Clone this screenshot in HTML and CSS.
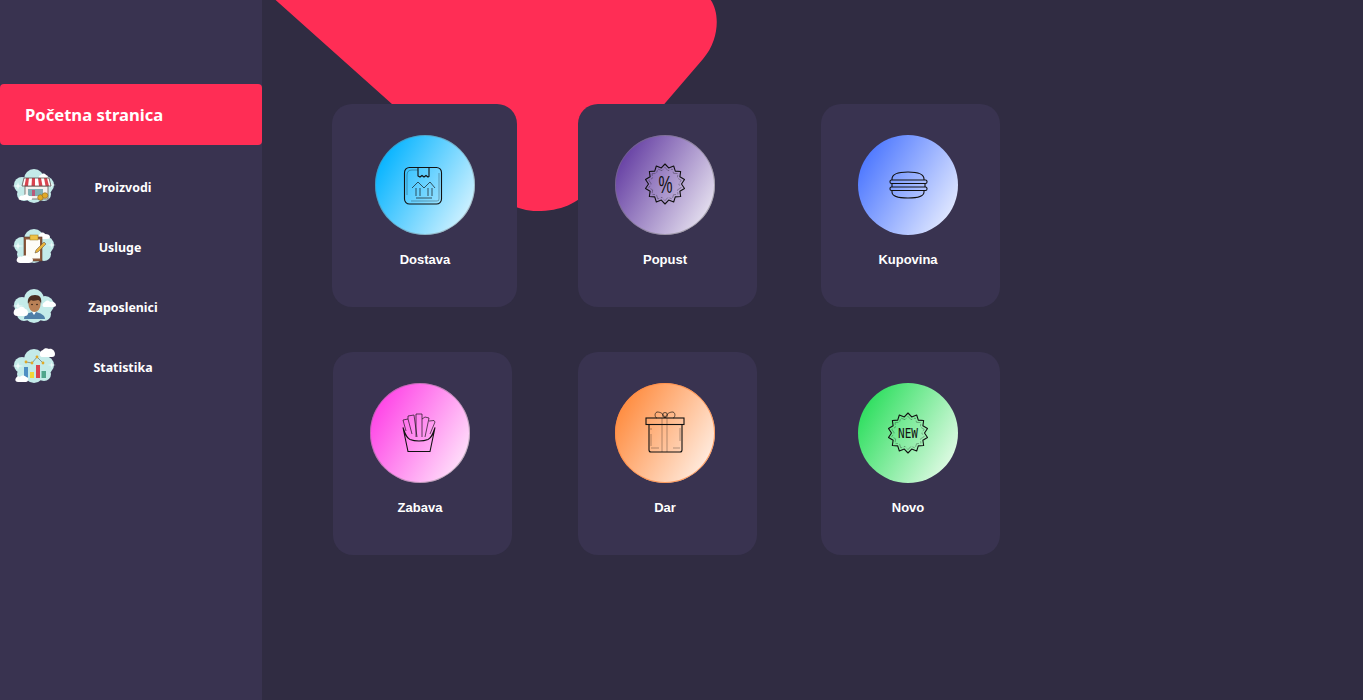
FILE: index.html
```html
<!DOCTYPE html>
<html lang="hr">
<head>
  <meta charset="UTF-8" />
  <meta name="viewport" content="width=device-width, initial-scale=1.0"/>
  <title>Početna stranica</title>
  <link rel="stylesheet" href="styles.css">
</head>
<body>

  <!-- shared shapes -->
  <svg class="defs" width="0" height="0" aria-hidden="true">
    <defs>
      <symbol id="cloud" viewBox="0 0 44 44" overflow="visible">
        <g fill="#c4ebe9">
          <circle cx="22" cy="14" r="10"/>
          <circle cx="10" cy="20" r="8"/>
          <circle cx="33" cy="20" r="9"/>
          <circle cx="22" cy="28" r="10"/>
          <circle cx="12" cy="29" r="7"/>
          <circle cx="32" cy="29" r="7"/>
        </g>
        <path fill="#eefafa" d="M0 21l5-.8 1-3 1 3 5 .8-5 .8-1 3-1-3zM35 20l4-.6.7-2.400.7 2.400 4 .6-4 .6-.7 2.400-.7-2.400z"/>
      </symbol>
      <symbol id="burst" viewBox="-25 -25 50 50">
        <polygon fill="none" stroke="#111" stroke-width="1.100" stroke-linejoin="round" points="0,-20 3.67,-16.09 8.68,-18.02 10.29,-12.9 15.64,-12.47 14.87,-7.16 19.5,-4.45 16.5,0 19.5,4.45 14.87,7.16 15.64,12.47 10.29,12.9 8.68,18.02 3.67,16.09 0,20 -3.67,16.09 -8.68,18.02 -10.29,12.9 -15.64,12.47 -14.87,7.16 -19.5,4.45 -16.5,0 -19.5,-4.45 -14.87,-7.16 -15.64,-12.47 -10.29,-12.9 -8.68,-18.02 -3.67,-16.09"/>
        <polygon fill="none" stroke="#111" stroke-opacity=".55" stroke-width=".7" stroke-dasharray="7 2 3 2" transform="scale(.83)" points="0,-20 3.67,-16.09 8.68,-18.02 10.29,-12.9 15.64,-12.47 14.87,-7.16 19.5,-4.45 16.5,0 19.5,4.45 14.87,7.16 15.64,12.47 10.29,12.9 8.68,18.02 3.67,16.09 0,20 -3.67,16.09 -8.68,18.02 -10.29,12.9 -15.64,12.47 -14.87,7.16 -19.5,4.45 -16.5,0 -19.5,-4.45 -14.87,-7.16 -15.64,-12.47 -10.29,-12.9 -8.68,-18.02 -3.67,-16.09"/>
      </symbol>
    </defs>
  </svg>

  <div class="app">

    <!-- Sidebar -->
    <nav class="sidebar">
      <a class="home-link">Početna stranica</a>

      <a class="menu-item">
        <svg class="menu-icon" viewBox="0 0 44 44">
          <use href="#cloud"/>
          <path fill="#fff" d="M29 10c1-2 4-2 5 0 2 0 3 3 0 3h-6c-2 0-1-3 1-3z"/>
          <rect x="13" y="21" width="23" height="13" fill="#f4f1ee" stroke="#6b5a58" stroke-width=".8"/>
          <rect x="16" y="24" width="15" height="7" fill="#7fb0b5"/>
          <rect x="20" y="25" width="3" height="6" fill="#b9587a"/>
          <path fill="#fff" d="M12 13h25l2 8H10z"/>
          <path fill="#d9434f" d="M14 13h3l-1 8h-3.500zM20 13h3v8h-3.500zM26 13h3l1.500 8H27zM32 13h3l2 8h-3.500z"/>
          <path fill="none" stroke="#5d4b4a" stroke-width=".8" d="M12 13h25l2 8H10z"/>
          <path fill="#fff" d="M7 33c0-2 3-3 4-2 1-2 5-2 6 0 2 0 4 1 3 3 0 1-1 1-2 1H9c-2 0-3-1-2-2z"/>
          <circle cx="28.500" cy="32.500" r="2.800" fill="#e0a929" stroke="#8a6a20" stroke-width=".6"/>
          <circle cx="33" cy="30.500" r="2.800" fill="#e0a929" stroke="#8a6a20" stroke-width=".6"/>
        </svg>
        <span class="menu-label">Proizvodi</span>
      </a>

      <a class="menu-item">
        <svg class="menu-icon" viewBox="0 0 44 44">
          <use href="#cloud"/>
          <path fill="#fff" d="M28 9c1-2 4-2 5 0 3 0 5 1 5 3 0 1-1 2-3 2h-6c-3 0-3-4-1-5z"/>
          <rect x="12" y="12" width="18" height="24" fill="#8d5a3c" stroke="#5b3a2a" stroke-width=".6"/>
          <rect x="14" y="14.500" width="14" height="19" fill="#fdfcf7"/>
          <rect x="18" y="10" width="8" height="5" fill="#eec246" stroke="#9a7a24" stroke-width=".5"/>
          <path fill="#e9b43c" stroke="#5b4a3a" stroke-width=".5" d="M24 25l8-8 2 2-8 8-3 1z"/>
          <path fill="#fff" d="M5 34c0-2 3-3 5-2 1-2 5-2 6 0 3 0 5 1 5 3 0 2-2 3-4 3H8c-3 0-4-3-3-4z"/>
        </svg>
        <span class="menu-label menu-label-left">Usluge</span>
      </a>

      <a class="menu-item">
        <svg class="menu-icon" viewBox="0 0 44 44">
          <use href="#cloud"/>
          <path fill="#4f7fa8" d="M12 34c0-4 4-6 8-7h4c4 1 9 3 9 7z"/>
          <path fill="#fff" d="M20 27l2 3 2-3z"/>
          <ellipse cx="22.500" cy="19.500" rx="6" ry="7.500" fill="#b98056"/>
          <path fill="#4b2e22" d="M16 19c-1-6 2-9 7-9s7 3 6 9c-1-3-2-4-3-4-3 1-6 1-7 0-1 1-2 2-3 4z"/>
          <circle cx="20" cy="19.500" r=".8" fill="#2a1a14"/>
          <circle cx="25" cy="19.500" r=".8" fill="#2a1a14"/>
          <path fill="#fff" d="M33 17c1-2 4-2 5 0 3-1 6 1 6 3 0 1-1 2-3 2h-9c-2 0-2-4 1-5zM2 26c0-2 3-3 4-2 1-3 6-3 7 0 2 0 3 2 3 4s-1 3-3 3H5c-3 0-4-3-3-5z"/>
        </svg>
        <span class="menu-label">Zaposlenici</span>
      </a>

      <a class="menu-item">
        <svg class="menu-icon" viewBox="0 0 44 44">
          <use href="#cloud"/>
          <path fill="#fff" d="M31 5c1-2 4-2 6-1 3-1 6 2 6 5 0 2-1 3-3 3H30c-3 0-3-6 1-7z"/>
          <path fill="none" stroke="#5a6468" stroke-width=".6" d="M14 17l6 1 5-6 6 6"/>
          <circle cx="14" cy="17" r="1.400" fill="#e0a929"/>
          <circle cx="20" cy="18" r="1.400" fill="#e0a929"/>
          <circle cx="25" cy="12" r="1.400" fill="#e0a929"/>
          <circle cx="31" cy="18" r="1.400" fill="#e0a929"/>
          <rect x="12" y="22" width="4" height="11" fill="#4f8fc4"/>
          <rect x="18" y="27" width="4" height="6" fill="#f2d73a"/>
          <rect x="24" y="20" width="4" height="13" fill="#d9434f"/>
          <rect x="29.500" y="26" width="4.500" height="7" fill="#4fa58c"/>
          <path fill="#fff" d="M4 33c1-2 3-2 4-1 1-2 5-2 6 0 2 0 3 2 2 3 0 1-1 2-2 2H6c-3 0-3-3-2-4z"/>
        </svg>
        <span class="menu-label">Statistika</span>
      </a>
    </nav>

    <!-- Main -->
    <main class="content">
      <svg class="blob" width="760" height="230" viewBox="0 0 760 230" aria-hidden="true">
        <path fill="#ff2d55" d="M8 -5L215 180C237 200 255 211 275 211C299 211 315 204 331 187L441 59C461 36 457 2 443 -5Z"/>
      </svg>

      <div class="cards">
        <div class="card card-wide">
          <div class="circle circle-blue">
            <svg class="card-icon" viewBox="0 0 100 100">
              <rect x="29.500" y="32.500" width="37" height="36.500" rx="5"/>
              <path class="thin" d="M32 60V40q0-5 5-5h6M64 38v26q0 2-2 2H36"/>
              <path d="M43 32.500V41l2 1 2-1.500 2 1.500 2-1.500 2 1.500 1-.5V32.500"/>
              <path class="mid" d="M37 53l6-6 6 6 6-6 5 6M41 53v8M45 53v8M53 53v8M57 53v8"/>
              <path class="mid" d="M41 63h16"/>
            </svg>
          </div>
          <span class="card-label">Dostava</span>
        </div>

        <div class="card">
          <div class="circle circle-purple">
            <svg class="card-icon" viewBox="0 0 100 100">
              <use href="#burst" x="25" y="24" width="50" height="50"/>
              <text class="percent" x="50.500" y="57.500" text-anchor="middle" textLength="14" lengthAdjust="spacingAndGlyphs">%</text>
            </svg>
          </div>
          <span class="card-label">Popust</span>
        </div>

        <div class="card">
          <div class="circle circle-indigo">
            <svg class="card-icon" viewBox="0 0 100 100">
              <path d="M34 45v-1c0-5 7-7 16-7s16 2 16 7v1"/>
              <rect x="32" y="45" width="37" height="3.500" rx="1.500"/>
              <rect x="32" y="52" width="37" height="3.500" rx="1.500"/>
              <path d="M34 49v3M67 49v3M34 56v1c0 4 7 6 16 6s16-2 16-6v-1"/>
            </svg>
          </div>
          <span class="card-label">Kupovina</span>
        </div>

        <div class="card card-shift">
          <div class="circle circle-pink">
            <svg class="card-icon" viewBox="0 0 100 100">
              <path d="M33 44.500c2 6 3 10 7 12 5 2 13 2 18 0 4-2 5-6 7-12l-5 24H38z"/>
              <path class="mid" d="M36 48l-3-11 5-1 4 15M38 36l0-3 6-1 3 22M46 54V31h6v23M52 36l3-2 4 1-4 19M59 38l5-.5 1 1.500-5 12"/>
            </svg>
          </div>
          <span class="card-label">Zabava</span>
        </div>

        <div class="card">
          <div class="circle circle-orange">
            <svg class="card-icon" viewBox="0 0 100 100">
              <rect x="31" y="35" width="38" height="6.500"/>
              <path d="M34 41.500V67q0 2 2 2h29q2 0 2-2V41.500"/>
              <path class="thin" d="M47 35v34M52 35v34M36 45v2M36 51v12M36 65h8M58 65h7M65 45v13"/>
              <path class="mid" d="M50 35c-2-5-5-6-8-6-3 1-2 6 0 6M50 35c2-5 5-6 8-6 3 1 2 6 0 6"/>
              <circle class="mid" cx="50" cy="32" r="2.500"/>
            </svg>
          </div>
          <span class="card-label">Dar</span>
        </div>

        <div class="card">
          <div class="circle circle-green">
            <svg class="card-icon" viewBox="0 0 100 100">
              <use href="#burst" x="25" y="25" width="50" height="50"/>
              <text class="new-tag" x="50" y="54.500" text-anchor="middle" textLength="20" lengthAdjust="spacingAndGlyphs">NEW</text>
            </svg>
          </div>
          <span class="card-label">Novo</span>
        </div>
      </div>
    </main>
  </div>

</body>
</html>
```

FILE: styles.css
```css
body {
  font-family: "Liberation Sans", Arial, sans-serif;
  margin: 0;
  background-color: #302c42;
  color: white;
  overflow: hidden;
}

.defs {
  position: absolute;
}

.app {
  display: flex;
  height: 700px;
}

.sidebar {
  width: 262px;
  flex-shrink: 0;
  padding-top: 84px;
  background-color: #393350;
  box-sizing: border-box;
}

.home-link {
  display: flex;
  align-items: center;
  height: 61px;
  padding-left: 25px;
  margin-bottom: 12px;
  background-color: #ff2d55;
  border-radius: 4px;
  font-family: "Noto Sans", sans-serif;
  font-size: 16.6px;
  font-weight: 700;
}

.menu-item {
  display: flex;
  align-items: center;
  height: 60px;
  padding-left: 12px;
}

.menu-icon {
  width: 44px;
  height: 44px;
  flex-shrink: 0;
}

.menu-label {
  width: 134px;
  text-align: center;
  font-family: "Noto Sans", sans-serif;
  font-size: 12.4px;
  font-weight: 700;
}

.menu-label-left {
  width: 128px;
}

.content {
  position: relative;
  flex: 1;
  padding: 104px 0 0 70px;
}

.blob {
  position: absolute;
  top: 0;
  left: 0;
}

.cards {
  position: relative;
  display: grid;
  grid-template-columns: 246px 243px 179px;
  grid-auto-rows: 203px;
  row-gap: 45px;
}

.card {
  display: flex;
  flex-direction: column;
  align-items: center;
  width: 179px;
  padding: 31px 5px 0 0;
  box-sizing: border-box;
  background-color: #393350;
  border-radius: 20px;
}

.card-wide {
  width: 185px;
  padding: 31px 0 0 1px;
}

.card-shift {
  margin-left: 1px;
  padding-right: 5px;
}

.circle {
  width: 100px;
  height: 100px;
  border-radius: 50%;
}

.circle-blue {
  background: linear-gradient(120deg, #00b2ff 10%, #d8f4ff 92%);
  box-shadow: inset 0 0 0 1px rgba(120, 120, 120, 0.4);
}

.circle-purple {
  background: linear-gradient(120deg, #6038a0 8%, #eae6f2 92%);
  box-shadow: inset 0 0 0 1px rgba(120, 120, 120, 0.5);
}

.circle-indigo {
  background: linear-gradient(120deg, #4a75ff 10%, #e6ecff 92%);
}

.circle-pink {
  background: linear-gradient(120deg, #ff40e6 10%, #ffe6fb 92%);
  box-shadow: inset 0 0 0 1px rgba(120, 120, 120, 0.45);
}

.circle-orange {
  background: linear-gradient(120deg, #ff8a3c 10%, #fff0e6 92%);
  box-shadow: inset 0 0 0 1px rgba(255, 140, 70, 0.8);
}

.circle-green {
  background: linear-gradient(120deg, #2ade5c 10%, #e6fbe9 92%);
}

.card-icon {
  display: block;
  width: 100px;
  height: 100px;
  fill: none;
  stroke: #111;
  stroke-width: 1.1;
}

.card-icon .thin {
  stroke-width: 0.7;
  stroke-opacity: 0.45;
}

.card-icon .mid {
  stroke-width: 0.9;
  stroke-opacity: 0.75;
}

.percent {
  fill: #111;
  stroke: none;
  font-family: "Liberation Sans", sans-serif;
  font-size: 23px;
}

.new-tag {
  fill: #111;
  stroke: none;
  font-family: "DejaVu Sans Mono", monospace;
  font-size: 14px;
}

.card-label {
  margin-top: 17px;
  font-size: 13px;
  line-height: 16px;
  font-weight: 700;
}
```
